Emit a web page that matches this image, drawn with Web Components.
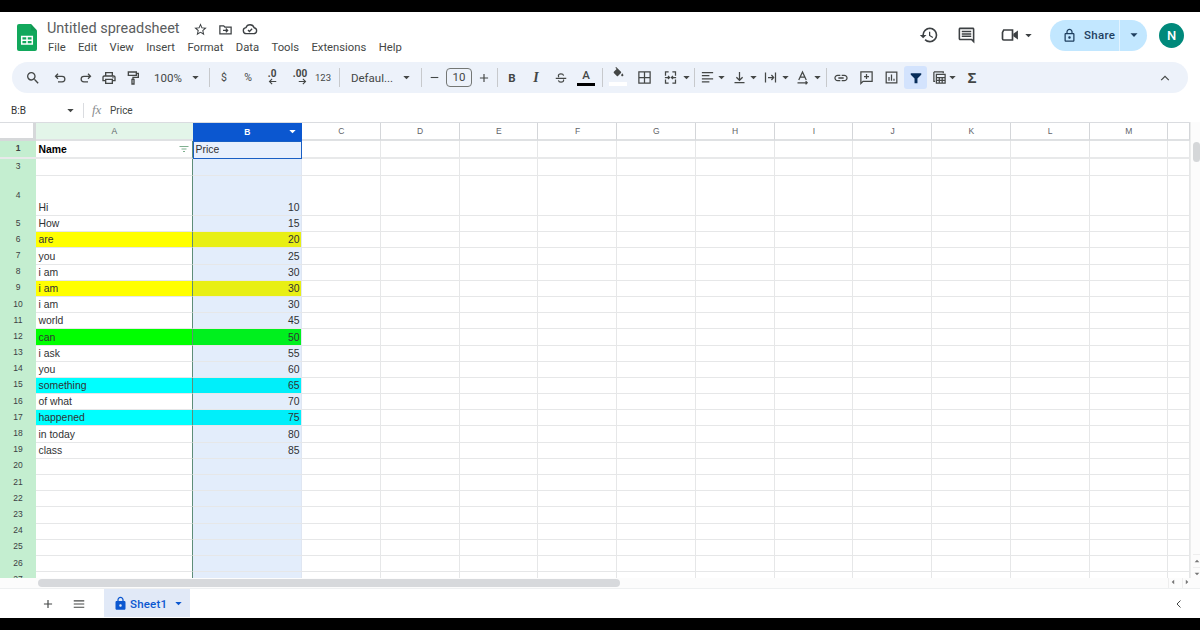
<!DOCTYPE html>
<html lang="en"><head><meta charset="utf-8"><title>Untitled spreadsheet</title>
<style>html,body{margin:0;padding:0;background:#000;height:630px;overflow:hidden;font-family:Roboto,"Liberation Sans",sans-serif}</style>
</head><body>
<gs-app>
  <gs-titlebar></gs-titlebar>
  <gs-toolbar></gs-toolbar>
  <gs-formula></gs-formula>
  <gs-grid></gs-grid>
  <gs-tabs></gs-tabs>
</gs-app>
<script>
const S='fill="none" stroke="currentColor" stroke-width="2"';
const ICONS={
search:'<path fill="currentColor" d="M15.5 14h-.79l-.28-.27A6.47 6.47 0 0 0 16 9.5 6.5 6.5 0 1 0 9.5 16c1.61 0 3.09-.59 4.23-1.57l.27.28v.79l5 4.99L20.49 19l-4.99-5zm-6 0C7.01 14 5 11.99 5 9.5S7.01 5 9.5 5 14 7.01 14 9.5 11.99 14 9.5 14z"/>',
undo:`<path ${S} d="M8 6 4 10l4 4M4 10h10.5a4.5 4.5 0 0 1 0 9H8"/>`,
redo:`<path ${S} d="M16 6l4 4-4 4M20 10H9.500a4.500 4.500 0 0 0 0 9H16"/>`,
print:'<path fill="currentColor" d="M19 8h-1V3H6v5H5c-1.66 0-3 1.34-3 3v6h4v4h12v-4h4v-6c0-1.66-1.34-3-3-3zM8 5h8v3H8V5zm8 12v2H8v-4h8v2zm2-2v-2H6v2H4v-4c0-.55.45-1 1-1h14c.55 0 1 .45 1 1v4h-2z"/><circle cx="18" cy="11.500" r="1" fill="currentColor"/>',
paint:`<path ${S} d="M5 3h12v5H5zM17 5h3v6h-8v3"/><path ${S} d="M10.500 14h3v7h-3z"/>`,
star:'<path fill="currentColor" d="M22 9.24l-7.19-.62L12 2 9.19 8.63 2 9.24l5.46 4.73L5.820 21 12 17.270 18.180 21l-1.630-7.030L22 9.240zM12 15.400l-3.760 2.270 1-4.280-3.320-2.880 4.380-.380L12 6.100l1.710 4.040 4.380.380-3.320 2.880 1 4.280L12 15.400z"/>',
folder:`<path ${S} d="M3 6h6l2 2h10v11H3z"/><path ${S} d="M8 13.500h7M12.500 10.500l3 3-3 3"/>`,
cloud:`<path ${S} d="M6.500 19a4.500 4.500 0 0 1-.6-8.960A6.500 6.500 0 0 1 18.200 10.100 4.500 4.500 0 0 1 18 19z"/><path ${S} d="M9 13.500l2.200 2.200 4-4"/>`,
history:'<path fill="currentColor" d="M13 3a9 9 0 0 0-9 9H1l3.890 3.890.07.140L9 12H6c0-3.870 3.130-7 7-7s7 3.130 7 7-3.130 7-7 7c-1.930 0-3.680-.790-4.940-2.060l-1.420 1.420A8.954 8.954 0 0 0 13 21a9 9 0 0 0 0-18zm-1 5v5l4.280 2.540.720-1.210-3.500-2.080V8H12z"/>',
chat:'<path fill="currentColor" d="M21.990 4c0-1.100-.890-2-1.990-2H4c-1.100 0-2 .900-2 2v12c0 1.100.900 2 2 2h14l4 4-.010-18zM20 4v13.170L18.830 16H4V4h16zM6 12h12v2H6zm0-3h12v2H6zm0-3h12v2H6z"/>',
meet:`<path ${S} d="M4.500 6H15v12H4.500A1.500 1.500 0 0 1 3 16.500V9z"/><path fill="currentColor" d="M16 10.500 21.500 6.500v11L16 13.500z"/>`,
lock:'<path fill="currentColor" d="M18 8h-1V6c0-2.760-2.240-5-5-5S7 3.240 7 6v2H6c-1.100 0-2 .900-2 2v10c0 1.100.900 2 2 2h12c1.100 0 2-.900 2-2V10c0-1.100-.900-2-2-2zM9 6c0-1.660 1.340-3 3-3s3 1.340 3 3v2H9V6zm9 14H6V10h12v10zm-6-3c1.100 0 2-.900 2-2s-.900-2-2-2-2 .900-2 2 .900 2 2 2z"/>',
lockf:'<path fill="currentColor" d="M18 8h-1V6c0-2.760-2.240-5-5-5S7 3.240 7 6v2H6c-1.100 0-2 .900-2 2v10c0 1.100.900 2 2 2h12c1.100 0 2-.900 2-2V10c0-1.100-.900-2-2-2zM9 6c0-1.660 1.340-3 3-3s3 1.340 3 3v2H9V6zm3 11c-1.100 0-2-.900-2-2s.900-2 2-2 2 .900 2 2-.900 2-2 2z"/>',
caret:'<path fill="currentColor" d="M5 8.500h14l-7 7.500z"/>',
plusm:'<path fill="currentColor" d="M19 13h-6v6h-2v-6H5v-2h6V5h2v6h6z"/>',
minus:'<path fill="currentColor" d="M5 11h14v2H5z"/>',
strike:`<path ${S} d="M3 12.500h18M16.500 8c-.5-2-2.200-3-4.500-3-2.600 0-4.500 1.400-4.500 3.300 0 .9.400 1.700 1 2.200M7.500 16c.5 2 2.200 3 4.500 3s4.500-1.300 4.500-3.200c0-.5-.1-.9-.3-1.300"/>`,
fill:'<path fill="currentColor" d="M16.560 8.940L7.620 0 6.210 1.410l2.380 2.380-5.150 5.150c-.590.590-.590 1.540 0 2.120l5.500 5.500c.290.290.680.440 1.060.440s.770-.150 1.060-.440l5.500-5.500c.590-.580.590-1.530 0-2.120zM19 11.500s-2 2.170-2 3.500c0 1.100.900 2 2 2s2-.900 2-2c0-1.330-2-3.500-2-3.500z"/>',
borders:`<path ${S} d="M3 3h18v18H3zM12 3v18M3 12h18"/>`,
merge:`<path ${S} d="M9 3H4v6M15 3h5v6M9 21H4v-6M15 21h5v-6M3 12h7M8 9.500 10.500 12 8 14.500M21 12h-7M16 9.500 13.500 12l2.500 2.500"/>`,
align:`<path ${S} d="M3 4h18M3 9h12M3 14h18M3 19h12"/>`,
valign:`<path ${S} d="M4 20h16M12 3v13M7 11.500l5 5 5-5"/>`,
wrap:`<path ${S} d="M4 4v16M20 4v16M8 12h9M13.500 8l3.500 4-3.500 4"/>`,
rotate:`<path ${S} stroke-width="1.800" d="M6 16 12 3l6 13M8.200 11.500h7.600M4 20.500h15M17 18l2.500 2.500-2.500 2.500"/>`,
link:'<path fill="currentColor" d="M3.900 12c0-1.710 1.390-3.100 3.100-3.100h4V7H7c-2.760 0-5 2.240-5 5s2.240 5 5 5h4v-1.900H7c-1.710 0-3.100-1.390-3.100-3.100zM8 13h8v-2H8v2zm9-6h-4v1.900h4c1.710 0 3.100 1.390 3.100 3.100s-1.390 3.100-3.100 3.100h-4V17h4c2.760 0 5-2.240 5-5s-2.240-5-5-5z"/>',
cadd:`<path ${S} d="M3 3h18v15H6.500L3 21.500zM12 6.500v8M8 10.500h8"/>`,
chart:`<path ${S} d="M3.500 3.500h17v17h-17z"/><path fill="currentColor" d="M7 11h2v6H7zM11 7h2v10h-2zM15 14h2v3h-2z"/>`,
filter:'<path fill="currentColor" d="M3 4h18v2.500L14.500 13v8h-5v-8L3 6.500z"/>',
filterl:'<path fill="currentColor" d="M3 6h18v2H3zM7 11h10v2H7zM10 16h4v2h-4z"/>',
table:`<path ${S} d="M3 3h15v2M3 3v15h2"/><path ${S} d="M7 7h14v14H7zM7 12h14M7 16.500h14M11.700 12v9M16.300 12v9"/>`,
up:`<path ${S} d="M5.500 15.500 12 9l6.500 6.500"/>`,
left:`<path ${S} d="M15 5 8 12l7 7"/>`,
arrl:`<path fill="none" stroke="currentColor" stroke-width="3" d="M22 12H4M11 5l-7 7 7 7"/>`,
arrr:`<path fill="none" stroke="currentColor" stroke-width="3" d="M2 12h18M13 5l7 7-7 7"/>`,
menu:'<path fill="currentColor" d="M3 5.500h18v2H3zM3 11h18v2H3zM3 16.500h18v2H3z"/>'
};
class GsIcon extends HTMLElement{
  connectedCallback(){
    const n=this.getAttribute('name'),s=this.getAttribute('size')||16;
    this.attachShadow({mode:'open'}).innerHTML=`<style>:host{display:inline-flex;width:${s}px;height:${s}px;flex:none}svg{width:100%;height:100%;display:block}</style><svg viewBox="0 0 24 24">${ICONS[n]}</svg>`;
  }
}
customElements.define('gs-icon',GsIcon);

class GsApp extends HTMLElement{
  constructor(){super();this.attachShadow({mode:'open'}).innerHTML=`<style>:host{display:flex;flex-direction:column;width:1200px;height:606px;margin-top:12px;background:#fff;overflow:hidden}</style><slot></slot>`;}
}
customElements.define('gs-app',GsApp);

class GsTitlebar extends HTMLElement{
  constructor(){super();
    const menu=['File','Edit','View','Insert','Format','Data','Tools','Extensions','Help'].map(m=>`<span>${m}</span>`).join('');
    this.attachShadow({mode:'open'}).innerHTML=`<style>
    :host{display:flex;align-items:flex-start;height:50px;flex:none;color:#444746;position:relative}
    .logo{margin:12px 0 0 17px;width:20px;height:27px;flex:none}
    .logo svg{display:block;width:100%;height:100%}
    .mid{margin-left:10px;display:flex;flex-direction:column}
    .name{display:flex;align-items:center;height:18px;margin-top:8px}
    .name b{font:400 14.450px/18px Roboto,sans-serif;color:#5a5d60;width:146px}
    .name gs-icon{margin-right:9px;color:#3c4043}
    .menu{display:flex;gap:12.400px;font:400 11.250px/14px Roboto,sans-serif;margin:3px 0 0 1px;color:#444746}
    .right{margin-left:auto;display:flex;align-items:center;height:50px;padding-right:16px;color:#3c4043;margin-top:-2px}
    .share{margin-left:16.500px;width:97px;height:31px;border-radius:16px;background:#c2e7ff;display:flex;align-items:center;color:#1f3f5f;font:500 11.500px Roboto,sans-serif;letter-spacing:.3px}
    .share .l{width:70px;display:flex;align-items:center;padding-left:12px;box-sizing:border-box;gap:7px;height:31px;border-right:1px solid #e3f3ff}
    .share .c{flex:1;display:flex;justify-content:center}
    .av{margin-left:12px;width:25px;height:25px;border-radius:50%;background:#00897b;color:#fff;font:500 13px/25px Roboto,sans-serif;text-align:center}
    </style>
    <div class="logo"><svg viewBox="0 0 20 27"><path fill="#12a85c" d="M2 0h12l6 6.500V25a2 2 0 0 1-2 2H2a2 2 0 0 1-2-2V2a2 2 0 0 1 2-2z"/><path fill="#0e8a4a" d="M14 0l6 6.500h-4.500A1.500 1.500 0 0 1 14 5z" opacity=".5"/><path fill="none" stroke="#fff" stroke-width="1.500" d="M4.700 12.500h10.600v7.500H4.700zM4.700 16.200h10.600M10 12.500v7.500"/></svg></div>
    <div class="mid">
      <div class="name"><b>Untitled spreadsheet</b><gs-icon name="star" size="15"></gs-icon><gs-icon name="folder" size="15" style="margin-left:1px"></gs-icon><gs-icon name="cloud" size="16"></gs-icon></div>
      <div class="menu">${menu}</div>
    </div>
    <div class="right">
      <gs-icon name="history" size="20"></gs-icon>
      <gs-icon name="chat" size="19" style="margin-left:18.500px"></gs-icon>
      <gs-icon name="meet" size="20" style="margin-left:23.500px"></gs-icon>
      <gs-icon name="caret" size="11" style="margin-left:3px"></gs-icon>
      <div class="share"><div class="l"><gs-icon name="lock" size="15"></gs-icon><span>Share</span></div><div class="c"><gs-icon name="caret" size="12"></gs-icon></div></div>
      <div class="av">N</div>
    </div>`;
  }
}
customElements.define('gs-titlebar',GsTitlebar);

class GsToolbar extends HTMLElement{
  constructor(){super();
    const ic=(n,s=15)=>`<gs-icon name="${n}" size="${s}"></gs-icon>`;
    const t=(x,st='')=>`<span style="${st}">${x}</span>`;
    const c=ic('caret',11);
    const sep='<i class="sep"></i>';
    // [centre x on the page, width, content]
    const items=[
      [33,16,ic('search',16)],[60,15,ic('undo')],[85,15,ic('redo')],[109,16,ic('print',16)],[133,16,ic('paint',16)],
      [168,32,t('100%','font-size:11.500px')],[195,11,c],[209,1,sep],
      [224,10,t('$','font-size:10.500px')],[248,12,t('%','font-size:10.500px')],
      [272,18,`<span class="dec">.0${ic('arrl',9)}</span>`],
      [300,20,`<span class="dec">.00${ic('arrr',9)}</span>`],[323,16,t('123','font-size:9.500px')],[339,1,sep],
      [372,44,t('Defaul...','font-size:11.500px;white-space:nowrap')],[406,11,c],[421,1,sep],
      [434,13,ic('minus',13)],[459,26,'<span class="size">10</span>'],[484,14,ic('plusm',14)],[497,1,sep],
      [512,10,t('B',"font:700 11.500px Roboto,sans-serif")],[536,10,t('I',"font:italic 700 14px 'Liberation Serif',serif")],[561,14,ic('strike',14)],
      [586,19,'<span class="tc">A<i></i></span>'],[602,1,sep],
      [618,18,'<span class="fl"><gs-icon name="fill" size="13"></gs-icon><i></i></span>'],[644,15,ic('borders')],[670,15,ic('merge')],[686,11,c],[694,1,sep],
      [707,15,ic('align')],[721,11,c],[739,15,ic('valign')],[753,11,c],[770,15,ic('wrap')],[785,11,c],[802,15,ic('rotate')],[817,11,c],[826,1,sep],
      [841,15,ic('link',16)],[866,15,ic('cadd')],[891,15,ic('chart')],
      [915.500,23,`<span class="on">${ic('filter',14)}</span>`],[939,15,ic('table')],[952,11,c],[972,12,t('Σ',"font:700 15px 'Liberation Sans',sans-serif")],[1165,14,ic('up',14)]
    ];
    let right=12,html='';
    for(const [cx,w,h] of items){const left=cx-w/2;html+=`<div class="it" style="width:${w}px;margin-left:${left-right}px">${h}</div>`;right=left+w;}
    this.attachShadow({mode:'open'}).innerHTML=`<style>
    :host{display:flex;flex:none;align-items:center;height:31px;margin:0 12px;width:1176px;border-radius:16px;background:#edf2fa;color:#444746;font:400 11px Roboto,sans-serif}
    .it{display:flex;align-items:center;justify-content:center;height:23px;flex:none}
    .sep{display:block;width:1px;height:19px;background:#c7c9cc}
    .size{box-sizing:border-box;width:26px;height:19px;border:1px solid #747775;border-radius:4px;text-align:center;font:400 11.500px/17px Roboto,sans-serif}
    .dec{display:flex;flex-direction:column;align-items:flex-end;font:700 10px/10px Roboto,sans-serif;white-space:nowrap;margin-top:-1px}
    .dec gs-icon{margin-top:-2px}
    .tc{display:flex;flex-direction:column;align-items:center;font:500 11.500px/13px Roboto,sans-serif;width:19px}
    .tc i{display:block;width:18px;height:3px;background:#000;margin-top:1px}
    .fl{display:flex;flex-direction:column;align-items:center;margin-top:-2px}
    .fl i{display:block;width:18px;height:4px;background:#fff;margin-top:2px}
    .on{display:flex;align-items:center;justify-content:center;width:23px;height:23px;border-radius:3px;background:#d3e3fd;color:#072d5a}
    </style>${html}`;
  }
}
customElements.define('gs-toolbar',GsToolbar);

class GsFormula extends HTMLElement{
  constructor(){super();this.attachShadow({mode:'open'}).innerHTML=`<style>
    :host{display:flex;flex:none;align-items:center;height:29px;padding:5px 0 0 11px;box-sizing:border-box;color:#444746;font:400 10px Roboto,sans-serif}
    .nm{width:54px;color:#333}
    .sep{width:1px;height:15px;background:#dadce0;margin:0 8px 0 7px}
    .fx{font:italic 400 13px "Liberation Serif",serif;color:#8a8d90;width:18px}
    </style><span class="nm">B:B</span><gs-icon name="caret" size="11"></gs-icon><span class="sep"></span><span class="fx">fx</span><span>Price</span>`;}
}
customElements.define('gs-formula',GsFormula);

class GsGrid extends HTMLElement{
  constructor(){super();
    const cols=['A','B','C','D','E','F','G','H','I','J','K','L','M',''];
    const rows=[[1,18,'Name','Price'],[3,17,'',''],[4,40,'Hi','10'],[5,16.200,'How','15'],[6,16.200,'are','20','yel'],[7,16.200,'you','25'],[8,16.200,'i am','30'],[9,16.200,'i am','30','yel'],[10,16.200,'i am','30'],[11,16.200,'world','45'],[12,16.200,'can','50','grn'],[13,16.200,'i ask','55'],[14,16.200,'you','60'],[15,16.200,'something','65','cyn'],[16,16.200,'of what','70'],[17,16.200,'happened','75','cyn'],[18,16.200,'in today','80'],[19,16.200,'class','85']];
    for(let r=20;r<=27;r++)rows.push([r,16.200,'','']);
    let h='<div class="corner"></div>';
    cols.forEach((c,i)=>{h+=`<div class="ch${i==0?' a':i==1?' b':''}">${c}${i==1?'<gs-icon name="caret" size="11"></gs-icon>':''}</div>`;});
    rows.forEach((r,ri)=>{
      const [n,,a,b,k]=r;const f=k?` ${k}`:'';
      h+=`<div class="rh${ri==0?' fr':''}">${n}</div>`;
      h+=`<div class="cell ca${f}${ri==0?' fr hd':''}">${a}${ri==0?'<gs-icon name="filterl" size="12"></gs-icon>':''}</div>`;
      h+=`<div class="cell cb${f}${ri==0?' fr sel':''}">${b}</div>`;
      for(let i=2;i<cols.length;i++)h+=`<div class="cell${ri==0?' fr':''}"></div>`;
    });
    const heights=['18px',...rows.map(r=>r[1]+'px')].join(' ');
    this.attachShadow({mode:'open'}).innerHTML=`<style>
    :host{display:flex;flex:none;height:467px;flex-direction:column;background:#fff}
    .top{display:flex;height:456px;flex:none}
    .sheet{display:grid;width:1190px;height:456px;overflow:hidden;flex:none;grid-template-columns:36px 156.500px 109.500px repeat(11,78.750px) 22px;grid-template-rows:${heights};font:400 10.400px "Liberation Sans",sans-serif;color:#303133;border-top:1px solid #dadce0;box-sizing:border-box}
    .corner{background:#fff;border-right:3px solid #d6d8da;border-bottom:3px solid #d6d8da;box-sizing:border-box}
    .ch{display:flex;align-items:center;justify-content:center;font:400 8.500px "Liberation Sans",sans-serif;color:#5f6368;border-right:1px solid #d4d6d9;border-bottom:2px solid #dfe1e3;box-sizing:border-box;position:relative;padding-left:1px}
    .ch.a{background:#e3f5e9;border-right:0;padding-left:0}
    .ch.b{background:#0b57d0;color:#fff;font-weight:700;border:0;padding-left:0}
    .ch gs-icon{position:absolute;right:4px;top:3px;color:#fff}
    .rh{display:flex;align-items:center;justify-content:center;background:#c4eed0;color:#3c4043;font:400 8.500px "Liberation Sans",sans-serif;border-bottom:1px solid #c4eed0;box-sizing:border-box;padding-bottom:2px}
    .rh.fr{font-weight:700}
    .cell{display:flex;align-items:flex-end;border-right:1px solid #e6e7e8;border-bottom:1px solid #e6e7e8;box-sizing:border-box;padding:0 1.500px 1px 2.500px;overflow:hidden;line-height:13px;position:relative}
    .fr{border-bottom:2px solid #e8e9ea}
    .ca{border-right:1.500px solid #5e8d78}
    .cb{justify-content:flex-end;background:#e3edfb;border-right:1px solid #dfe6f2}
    .hd{font-weight:700;align-items:center;justify-content:space-between;color:#000;padding-top:1px;padding-bottom:0}
    .hd gs-icon{color:#7fb08f;margin-top:-1px}
    .sel{justify-content:flex-start;align-items:center;border:1.500px solid #1a5fc4;background:#e8f0fd;padding-left:2px}
    .ca.yel{background:#ff0}.cb.yel{background:#e8ef14}
    .ca.grn{background:#0f0}.cb.grn{background:#00f01e}
    .ca.cyn{background:#0ff}.cb.cyn{background:#00effa}
    .vs{flex:1;border-left:1px solid #eceded;position:relative;background:#fcfcfc}
    .vs .th{position:absolute;left:2px;top:20px;width:7px;height:20px;border-radius:4px;background:#d5d7d9}
    .vs span{position:absolute;left:2px;width:7px;height:12px;display:flex;align-items:center;justify-content:center;color:#777;border-top:1px solid #eee}
    .hs{display:flex;align-items:center;height:11px;flex:none;border-bottom:1px solid #eef0f1;box-sizing:border-box;background:#fcfcfc}
    .hs .th{margin-left:38px;width:582px;height:8px;border-radius:4px;background:#d7d9dc}
    .hs .ar{margin-left:auto;display:flex;gap:3px;padding-right:7px;color:#777}
    .hs .ar b{width:10px;height:10px;display:flex;border-left:1px solid #eee}
    </style>
    <div class="top"><div class="sheet">${h}</div><div class="vs"><div class="th"></div><span style="top:432px"><gs-icon name="caret" size="8" style="transform:rotate(180deg)"></gs-icon></span><span style="top:445px"><gs-icon name="caret" size="8"></gs-icon></span></div></div>
    <div class="hs"><div class="th"></div><div class="ar"><b><gs-icon name="caret" size="8" style="transform:rotate(90deg)"></gs-icon></b><b><gs-icon name="caret" size="8" style="transform:rotate(-90deg)"></gs-icon></b></div></div>`;
  }
}
customElements.define('gs-grid',GsGrid);

class GsTabs extends HTMLElement{
  constructor(){super();this.attachShadow({mode:'open'}).innerHTML=`<style>
    :host{display:flex;flex:none;align-items:center;height:29px;color:#444746}
    .tab{margin-left:18px;width:86px;height:28px;background:#e1e9f7;display:flex;align-items:center;box-sizing:border-box;padding:1px 0 0 9px;color:#0b57d0;font:500 11.500px Roboto,sans-serif;align-self:flex-start}
    .tab span{margin:0 6px 0 2px;letter-spacing:.2px}
    .end{margin-left:auto;margin-right:15px}
    </style>
    <gs-icon name="plusm" size="14" style="margin-left:41px"></gs-icon>
    <gs-icon name="menu" size="14" style="margin-left:17px"></gs-icon>
    <div class="tab"><gs-icon name="lockf" size="15"></gs-icon><span>Sheet1</span><gs-icon name="caret" size="11"></gs-icon></div>
    <gs-icon class="end" name="left" size="12"></gs-icon>`;}
}
customElements.define('gs-tabs',GsTabs);
</script>
</body></html>
